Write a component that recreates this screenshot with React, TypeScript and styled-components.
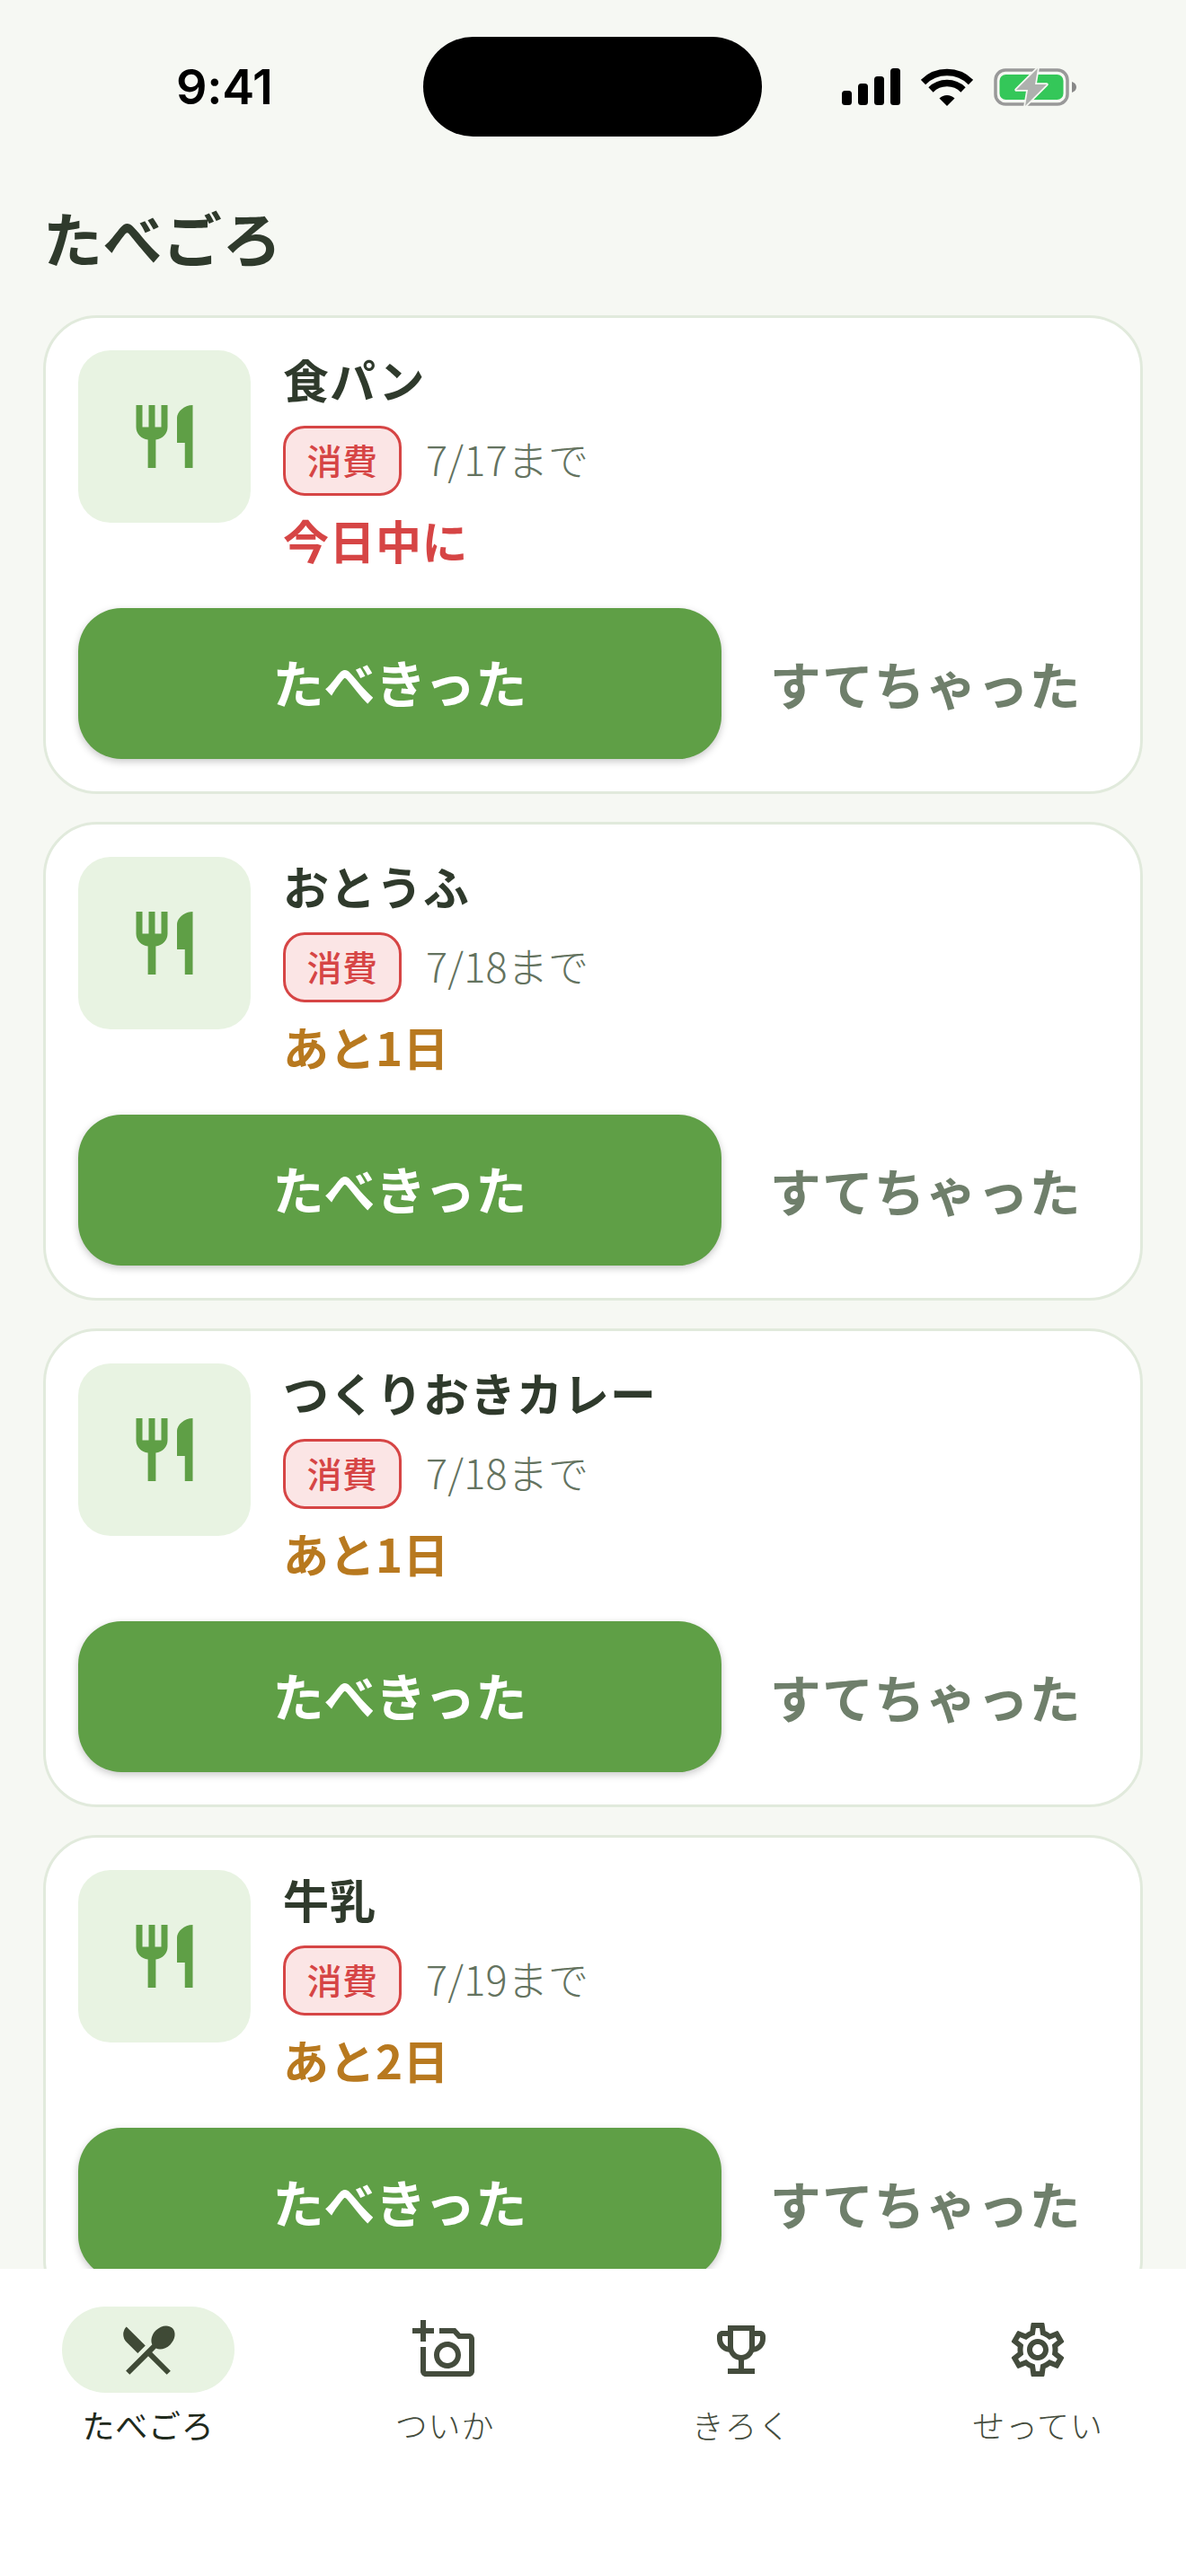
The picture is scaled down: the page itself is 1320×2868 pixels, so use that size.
import React from "react";
import styled, { createGlobalStyle } from "styled-components";
import { MdRestaurant, MdRestaurantMenu, MdOutlineAddAPhoto, MdOutlineEmojiEvents, MdOutlineSettings } from "react-icons/md";

const FONT = `"Noto Sans CJK JP", "Noto Sans", sans-serif`;

const Global = createGlobalStyle`
  html, body { margin: 0; padding: 0; background: #f6f8f3; }
  * { box-sizing: border-box; }
`;

const Screen = styled.div`
  width: 1320px;
  height: 2868px;
  display: flex;
  flex-direction: column;
  overflow: hidden;
  background: #f6f8f3;
  font-family: ${FONT};
`;

const StatusBar = styled.div`
  flex: none;
  height: 215px;
  padding-top: 41px;
  display: grid;
  grid-template-columns: 471px 377px 1fr;
  align-items: start;
`;

const TimeSlot = styled.div`
  height: 111px;
  display: flex;
  align-items: center;
  padding-left: 196px;
  font-family: Inter, "Liberation Sans", sans-serif;
  font-weight: 600;
  font-size: 54px;
  letter-spacing: -0.3px;
  color: #000;
`;

const Island = styled.div`
  height: 111px;
  border-radius: 56px;
  background: #000;
`;

const StatusIcons = styled.div`
  height: 111px;
  padding-left: 89px;
  display: flex;
  align-items: center;
  gap: 23px;
`;

const Main = styled.main`
  flex: 1;
  min-height: 0;
  overflow: hidden;
  padding: 0 48px;
  display: flex;
  flex-direction: column;
`;

const Heading = styled.h1`
  flex: none;
  margin: 0 0 40px;
  height: 96px;
  line-height: 96px;
  font-size: 66px;
  font-weight: 700;
  letter-spacing: 0.5px;
  color: #2f3a2c;
`;

const List = styled.div`
  display: flex;
  flex-direction: column;
  gap: 31px;
`;

const Card = styled.article`
  flex: none;
  height: 533px;
  padding: 36px;
  background: #fff;
  border: 3px solid #e1eadc;
  border-radius: 60px;
  display: flex;
  flex-direction: column;
  gap: 43px;
`;

const TopRow = styled.div`
  display: flex;
  gap: 36px;
`;

const Thumb = styled.div`
  flex: none;
  width: 192px;
  height: 192px;
  border-radius: 36px;
  background: #e8f3e2;
  color: #5f9f46;
  display: flex;
  align-items: center;
  justify-content: center;
`;

const Info = styled.div`
  flex: 1;
  display: flex;
  flex-direction: column;
`;

const Name = styled.div`
  height: 72px;
  line-height: 64px;
  font-size: 51px;
  font-weight: 600;
  letter-spacing: 1px;
  color: #2f3a2c;
`;

const MetaRow = styled.div`
  display: flex;
  align-items: center;
  gap: 27px;
  height: 78px;
  margin-top: 12px;
`;

const Badge = styled.span`
  width: 132px;
  height: 78px;
  padding-bottom: 4px;
  display: flex;
  align-items: center;
  justify-content: center;
  border: 3px solid #d64545;
  border-radius: 24px;
  background: #fbe5e5;
  color: #d64545;
  font-size: 39px;
  font-weight: 500;
  letter-spacing: 0.6px;
`;

const DateText = styled.span`
  margin-bottom: 5px;
  font-size: 45px;
  font-weight: 300;
  letter-spacing: 0.2px;
  color: #64735f;
`;

const Urgency = styled.div<{ $tone: string }>`
  height: 66px;
  margin-top: 16px;
  line-height: 66px;
  font-size: 51px;
  font-weight: 700;
  letter-spacing: 0.5px;
  color: ${(p) => p.$tone};
`;

const Actions = styled.div`
  display: flex;
  gap: 24px;
  height: 168px;
`;

const PrimaryButton = styled.button`
  flex: 1;
  border: 0;
  padding: 0 0 6px;
  border-radius: 48px;
  background: #5f9f46;
  color: #fff;
  font-family: ${FONT};
  font-size: 57px;
  font-weight: 600;
  box-shadow: 0 3px 9px rgba(0, 0, 0, 0.22);
`;

const SecondaryButton = styled.button`
  flex: none;
  border: 0;
  padding: 0 30px 3px;
  background: transparent;
  color: #6f7f6b;
  font-family: ${FONT};
  font-size: 57px;
  font-weight: 700;
  letter-spacing: 0.6px;
`;

const Nav = styled.nav`
  flex: none;
  height: 342px;
  background: #fff;
  padding-top: 42px;
  display: grid;
  grid-template-columns: repeat(4, 330px);
`;

const NavItem = styled.div<{ $active?: boolean }>`
  display: flex;
  flex-direction: column;
  align-items: center;
  gap: 8px;
  color: ${(p) => (p.$active ? "#1f2a1c" : "#444c3d")};
  font-weight: ${(p) => (p.$active ? 400 : 300)};
`;

const NavIcon = styled.div<{ $active?: boolean }>`
  width: 192px;
  height: 96px;
  border-radius: 48px;
  background: ${(p) => (p.$active ? "#e8f3e2" : "transparent")};
  color: ${(p) => (p.$active ? "#3f4a36" : "#444c3d")};
  display: flex;
  align-items: center;
  justify-content: center;
`;

const NavLabel = styled.span`
  height: 54px;
  line-height: 54px;
  font-size: 36px;
  letter-spacing: 0.8px;
`;

type Food = { name: string; date: string; note: string; tone: string };

const foods: Food[] = [
  { name: "食パン", date: "7/17まで", note: "今日中に", tone: "#d64545" },
  { name: "おとうふ", date: "7/18まで", note: "あと1日", tone: "#b8791f" },
  { name: "つくりおきカレー", date: "7/18まで", note: "あと1日", tone: "#b8791f" },
  { name: "牛乳", date: "7/19まで", note: "あと2日", tone: "#b8791f" },
];

const Signal = () => (
  <svg width="65" height="41" viewBox="0 0 65 41" fill="#000">
    <rect x="0" y="25" width="11" height="16" rx="3.5" />
    <rect x="18" y="17" width="11" height="24" rx="3.5" />
    <rect x="36" y="9" width="11" height="32" rx="3.5" />
    <rect x="54" y="0" width="11" height="41" rx="3.5" />
  </svg>
);

const Wifi = () => (
  <svg width="58" height="42" viewBox="0 0 58 42">
    <path d="M2.5 15.5A37.5 37.5 0 0 1 55.5 15.5" fill="none" stroke="#000" strokeWidth="7.5" />
    <path d="M11 24A25.5 25.5 0 0 1 47 24" fill="none" stroke="#000" strokeWidth="7.5" />
    <path d="M29 42L20.5 33.5A12 12 0 0 1 37.5 33.5Z" fill="#000" />
  </svg>
);

const Battery = () => (
  <svg width="92" height="46" viewBox="0 0 92 46">
    <rect x="2" y="4" width="80" height="38" rx="11" fill="none" stroke="#999" strokeWidth="3.5" />
    <rect x="6.5" y="9" width="71" height="28" rx="7" fill="#34c759" />
    <path d="M87 17C90 18 92 20 92 23S90 28 87 29Z" fill="#888" />
    <path d="M49 2L25 26H38L35 44L59 20H46Z" fill="#aeb0ae" stroke="#f6f8f3" strokeWidth="3.5" strokeLinejoin="round" paintOrder="stroke" />
  </svg>
);

const FoodCard = ({ food }: { food: Food }) => (
  <Card>
    <TopRow>
      <Thumb>
        <MdRestaurant size={84} />
      </Thumb>
      <Info>
        <Name>{food.name}</Name>
        <MetaRow>
          <Badge>消費</Badge>
          <DateText>{food.date}</DateText>
        </MetaRow>
        <Urgency $tone={food.tone}>{food.note}</Urgency>
      </Info>
    </TopRow>
    <Actions>
      <PrimaryButton>たべきった</PrimaryButton>
      <SecondaryButton>すてちゃった</SecondaryButton>
    </Actions>
  </Card>
);

export default function App() {
  return (
    <Screen>
      <Global />
      <StatusBar>
        <TimeSlot>9:41</TimeSlot>
        <Island />
        <StatusIcons>
          <Signal />
          <Wifi />
          <Battery />
        </StatusIcons>
      </StatusBar>
      <Main>
        <Heading>たべごろ</Heading>
        <List>
          {foods.map((f) => (
            <FoodCard key={f.name} food={f} />
          ))}
        </List>
      </Main>
      <Nav>
        <NavItem $active>
          <NavIcon $active>
            <MdRestaurantMenu size={72} />
          </NavIcon>
          <NavLabel>たべごろ</NavLabel>
        </NavItem>
        <NavItem>
          <NavIcon>
            <MdOutlineAddAPhoto size={72} />
          </NavIcon>
          <NavLabel>ついか</NavLabel>
        </NavItem>
        <NavItem>
          <NavIcon>
            <MdOutlineEmojiEvents size={72} />
          </NavIcon>
          <NavLabel>きろく</NavLabel>
        </NavItem>
        <NavItem>
          <NavIcon>
            <MdOutlineSettings size={72} />
          </NavIcon>
          <NavLabel>せってい</NavLabel>
        </NavItem>
      </Nav>
    </Screen>
  );
}
